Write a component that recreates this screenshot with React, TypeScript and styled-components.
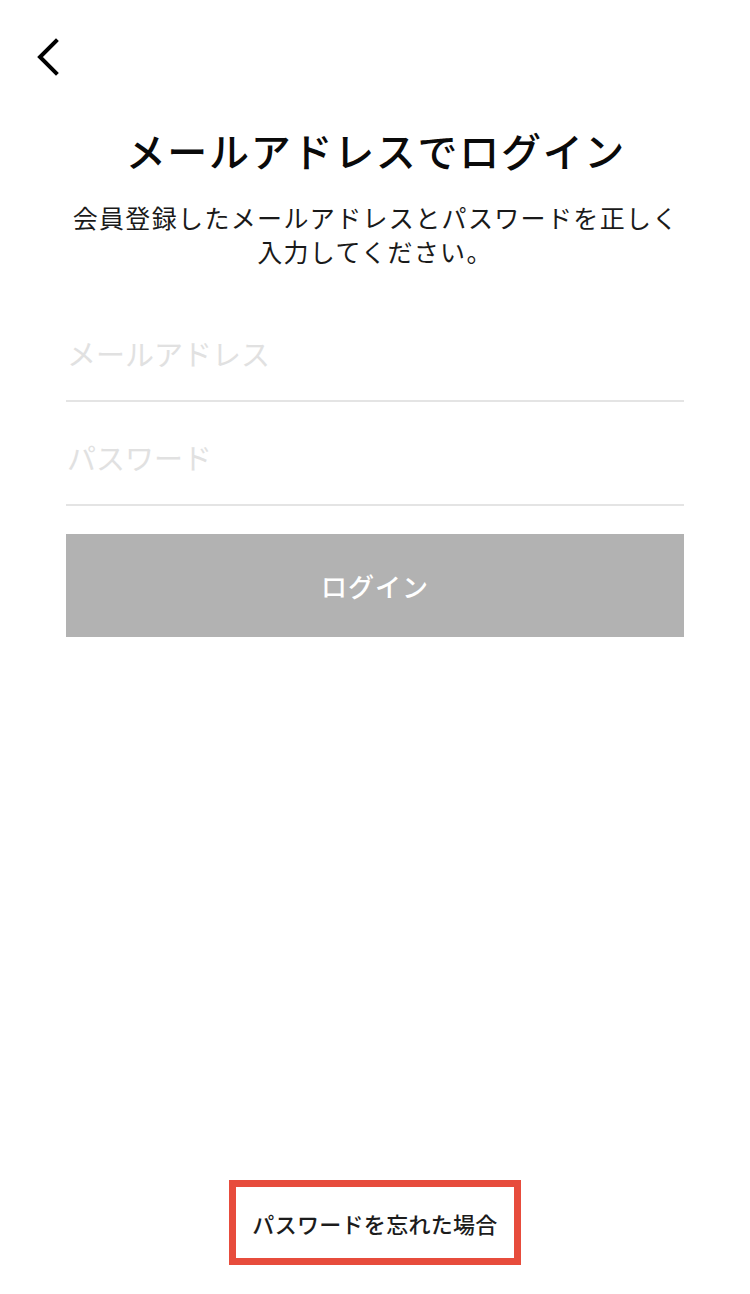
import React from "react";
import styled, { createGlobalStyle } from "styled-components";

const GlobalStyle = createGlobalStyle`
  html, body {
    margin: 0;
    padding: 0;
    background: #ffffff;
  }
  body {
    font-family: "Noto Sans CJK JP", "Noto Sans", sans-serif;
    color: #111111;
  }
  * { box-sizing: border-box; }
`;

const Page = styled.div`
  display: flex;
  flex-direction: column;
  min-height: 1294px;
  background: #ffffff;
`;

const Header = styled.header`
  display: flex;
  align-items: center;
  padding: 38px 0 0 34px;
  height: 76px;
`;

const BackButton = styled.button`
  display: flex;
  align-items: center;
  justify-content: center;
  width: 28px;
  height: 38px;
  padding: 0;
  border: none;
  background: transparent;
  cursor: pointer;
`;

const Content = styled.main`
  display: flex;
  flex-direction: column;
  padding: 0 66px;
`;

const Title = styled.h1`
  margin: 46px 0 0;
  font-size: 40px;
  line-height: 56px;
  font-weight: 500;
  text-align: center;
  color: #0a0a0a;
  letter-spacing: 1.7px;
  text-indent: 1.7px;
`;

const Lead = styled.p`
  margin: 22px -20px 0;
  font-size: 25px;
  line-height: 34px;
  font-weight: 400;
  text-align: center;
  color: #1a1a1a;
  letter-spacing: 1.35px;
  text-indent: 1.35px;
`;

const Form = styled.form`
  display: flex;
  flex-direction: column;
  margin-top: 30px;
`;

const Field = styled.input`
  width: 100%;
  height: 104px;
  padding: 8px 0 0 1px;
  border: none;
  border-bottom: 2px solid #e4e4e4;
  outline: none;
  background: transparent;
  font-family: "Noto Sans CJK JP", "Noto Sans", sans-serif;
  font-size: 29px;
  color: #111111;

  &::placeholder {
    color: #e1e1e1;
  }
`;

const SubmitButton = styled.button`
  margin-top: 28px;
  height: 103px;
  border: none;
  background: #b2b2b2;
  color: #ffffff;
  font-family: "Noto Sans CJK JP", "Noto Sans", sans-serif;
  font-size: 26px;
  font-weight: 500;
  letter-spacing: 1px;
  cursor: pointer;
`;

const Footer = styled.footer`
  display: flex;
  justify-content: center;
  margin-top: auto;
  padding-bottom: 29px;
`;

const ForgotLink = styled.a`
  display: flex;
  align-items: center;
  justify-content: center;
  width: 292px;
  height: 85px;
  border: 7px solid #e74c3c;
  color: #1c1c1c;
  font-size: 22px;
  font-weight: 500;
  text-decoration: none;
  letter-spacing: 0.3px;
`;

export default function App() {
  return (
    <>
      <GlobalStyle />
      <Page>
        <Header>
          <BackButton aria-label="戻る">
            <svg width="28" height="38" viewBox="0 0 28 38">
              <polyline
                points="22,3 6,19 22,35"
                fill="none"
                stroke="#000"
                strokeWidth="4"
                strokeLinecap="square"
              />
            </svg>
          </BackButton>
        </Header>
        <Content>
          <Title>メールアドレスでログイン</Title>
          <Lead>
            会員登録したメールアドレスとパスワードを正しく
            <br />
            入力してください。
          </Lead>
          <Form onSubmit={(e) => e.preventDefault()}>
            <Field type="email" placeholder="メールアドレス" />
            <Field type="password" placeholder="パスワード" />
            <SubmitButton type="submit">ログイン</SubmitButton>
          </Form>
        </Content>
        <Footer>
          <ForgotLink href="#">パスワードを忘れた場合</ForgotLink>
        </Footer>
      </Page>
    </>
  );
}
